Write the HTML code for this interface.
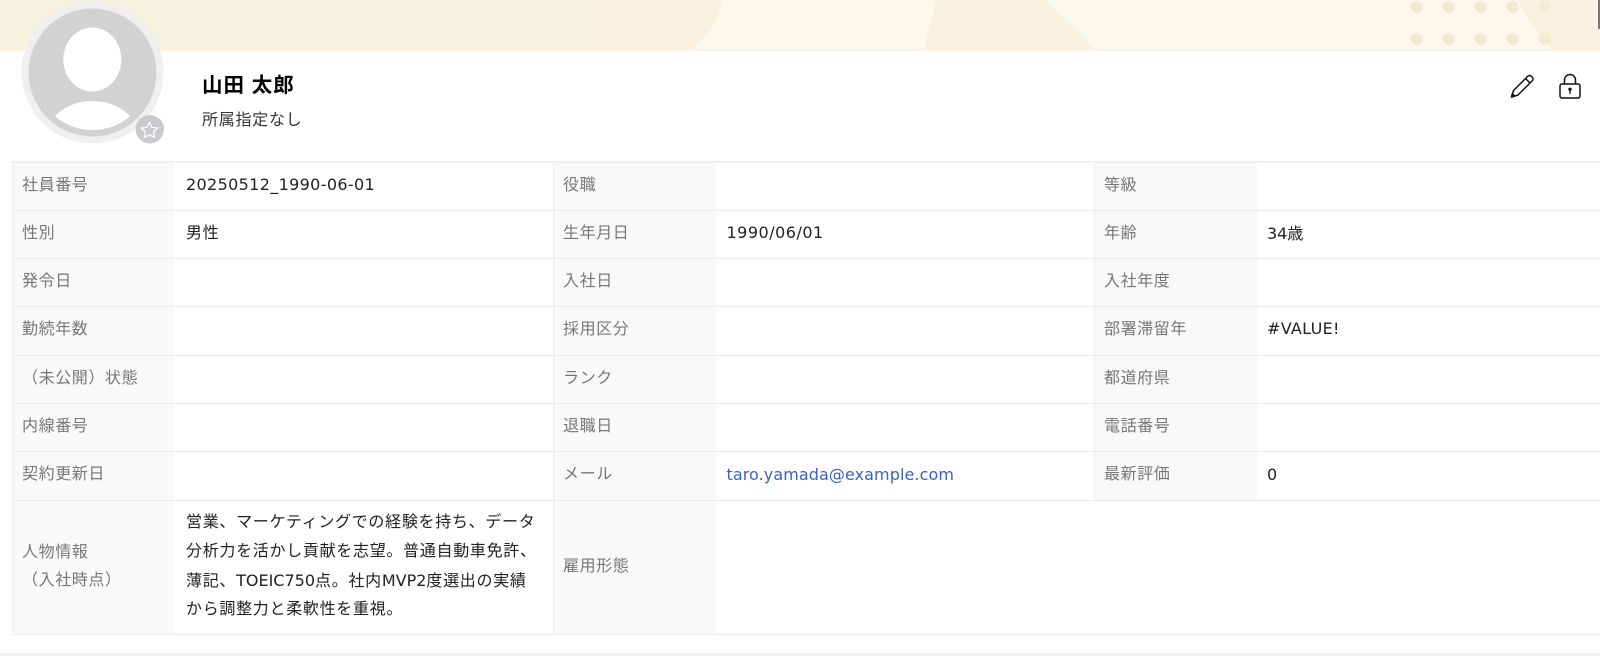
<!DOCTYPE html>
<html lang="ja"><head><meta charset="utf-8"><title>社員情報</title>
<style>
html,body{margin:0;padding:0;background:#fff}
body{width:1600px;height:659px;position:relative;overflow:hidden;font-family:"Liberation Sans","Noto Sans CJK JP",sans-serif;color:#222}
.a{position:absolute}
.t{position:absolute;font-size:16px;line-height:24px;white-space:nowrap;letter-spacing:.6px}
.l{color:#777}
.d{font-family:"DejaVu Sans","Noto Sans CJK JP",sans-serif;letter-spacing:0}
.bg{position:absolute;background:#f9f9fb}
.h{position:absolute;left:12px;width:1588px;height:1px;background:#ececef}
.v{position:absolute;top:161px;height:474px;width:1px;background:#ececef}
</style></head><body>
<svg class="a" style="left:0;top:0" width="1600" height="51" viewBox="0 0 1600 51">
<rect width="1600" height="51" fill="#fbf8ec"/>
<rect width="598" height="49" fill="#f6f2e0"/>
<path d="M598 0H722C719 20 709 36 692 49H598Z" fill="#f8f1df"/>
<path d="M936 0H1047C1064 20 1087 36 1093 49H924Z" fill="#f8f1df"/>
<path d="M1518 0C1528 22 1542 38 1552 49H1600V0Z" fill="#f8f1df"/>
<rect y="49" width="1600" height="2" fill="#f8f5e8"/>
<g fill="#f3e9cf">
<circle cx="1416.700" cy="6.700" r="6"/><circle cx="1448.700" cy="6.700" r="6"/><circle cx="1480.700" cy="6.700" r="6"/><circle cx="1512.700" cy="6.700" r="6"/><circle cx="1544.700" cy="6.700" r="6"/>
<circle cx="1416.700" cy="38.700" r="6"/><circle cx="1448.700" cy="38.700" r="6"/><circle cx="1480.700" cy="38.700" r="6"/><circle cx="1512.700" cy="38.700" r="6"/><circle cx="1544.700" cy="38.700" r="6"/>
</g>
<rect x="1598" y="0" width="2" height="29" fill="#777"/>
</svg>
<svg class="a" style="left:20px;top:0" width="150" height="150" viewBox="0 0 150 150">
<circle cx="72.500" cy="72.500" r="71" fill="#efefef"/>
<circle cx="72.500" cy="72.500" r="64" fill="#d2d2d2"/>
<ellipse cx="72.300" cy="59.500" rx="29" ry="32" fill="#fff"/>
<path d="M35 116C45 106 58 101 72.500 101C87 101 100 106 110 116C100 125 87 130 72.500 130C58 130 45 125 35 116Z" fill="#fff"/>
<circle cx="129.800" cy="129.200" r="14.200" fill="#c9cacd"/>
<path d="M129.500 122L131.900 127.300L137.700 128L133.400 131.900L134.600 137.500L129.500 134.700L124.400 137.500L125.600 131.900L121.300 128L127.100 127.300Z" fill="none" stroke="#fff" stroke-width="1.200" stroke-linejoin="round"/>
</svg>
<div class="t" style="left:202px;top:74px;font-size:20.500px;letter-spacing:1px;font-weight:700;color:#000">山田 太郎</div>
<div class="t" style="left:202px;top:109px;color:#333;letter-spacing:.75px">所属指定なし</div>
<svg class="a" style="left:1500px;top:70px" width="90" height="32" viewBox="0 0 90 32" fill="none" stroke="#111" stroke-width="1.500" stroke-linejoin="round">
<path d="M11.500 27L13.500 20.500L28 6Q29.500 5 31 6L32.500 7.500Q33.500 9 32.500 10.500L18 25Z"/>
<path d="M25.500 8.500L30 13"/>
<path d="M11.500 27L12.400 23.800L14.800 26Z" fill="#111"/>
<rect x="60" y="14" width="20" height="14" rx="2"/>
<path d="M64.500 14V10A5.500 5.500 0 0 1 75.500 10V14"/>
<circle cx="70" cy="19.300" r="1.700" fill="#111" stroke="none"/><path d="M70 19.500V24" stroke-width="1.300"/>
</svg>

<div class="bg" style="left:13px;top:162px;width:161px;height:472px"></div>
<div class="bg" style="left:554px;top:162px;width:162px;height:472px"></div>
<div class="bg" style="left:1095px;top:162px;width:162px;height:338px"></div>
<div class="h" style="top:161px;background:#f0f0f2;height:2px"></div><div class="h" style="top:210px"></div><div class="h" style="top:258px"></div><div class="h" style="top:306px"></div><div class="h" style="top:355px"></div><div class="h" style="top:403px"></div><div class="h" style="top:451px"></div><div class="h" style="top:500px"></div><div class="h" style="top:634px"></div>
<div class="v" style="left:12px"></div><div class="v" style="left:553px"></div><div class="v" style="left:1094px;height:339px"></div>

<div class="t l" style="left:22px;top:174px">社員番号</div><div class="t d" style="left:186px;top:173px;letter-spacing:.35px">20250512_1990-06-01</div>
<div class="t l" style="left:563px;top:174px">役職</div>
<div class="t l" style="left:1104px;top:174px">等級</div>
<div class="t l" style="left:22px;top:222px">性別</div><div class="t" style="left:186px;top:222px">男性</div>
<div class="t l" style="left:563px;top:222px">生年月日</div><div class="t d" style="left:726.500px;top:221px;letter-spacing:.5px">1990/06/01</div>
<div class="t l" style="left:1104px;top:222px">年齢</div><div class="t" style="left:1267px;top:222px"><span class="d">34</span>歳</div>
<div class="t l" style="left:22px;top:270px">発令日</div>
<div class="t l" style="left:563px;top:270px">入社日</div>
<div class="t l" style="left:1104px;top:270px">入社年度</div>
<div class="t l" style="left:22px;top:318px">勤続年数</div>
<div class="t l" style="left:563px;top:318px">採用区分</div>
<div class="t l" style="left:1104px;top:318px">部署滞留年</div><div class="t d" style="left:1267px;top:317px;letter-spacing:.3px">#VALUE!</div>
<div class="t l" style="left:22px;top:367px">（未公開）状態</div>
<div class="t l" style="left:563px;top:367px">ランク</div>
<div class="t l" style="left:1104px;top:367px">都道府県</div>
<div class="t l" style="left:22px;top:415px">内線番号</div>
<div class="t l" style="left:563px;top:415px">退職日</div>
<div class="t l" style="left:1104px;top:415px">電話番号</div>
<div class="t l" style="left:22px;top:463px">契約更新日</div>
<div class="t l" style="left:563px;top:463px">メール</div><div class="t d" style="left:726.500px;top:463px;color:#3b62c4;letter-spacing:.08px">taro.yamada@example.com</div>
<div class="t l" style="left:1104px;top:463px">最新評価</div><div class="t d" style="left:1267px;top:463px">0</div>
<div class="t l" style="left:22px;top:541px">人物情報</div>
<div class="t l" style="left:22px;top:569px">（入社時点）</div>
<div class="t" style="left:186px;top:509px;line-height:28.800px;letter-spacing:.7px">営業、マーケティングでの経験を持ち、データ<br>分析力を活かし貢献を志望。普通自動車免許、<br>薄記、<span class="d">TOEIC750</span>点。社内<span class="d">MVP2</span>度選出の実績<br>から調整力と柔軟性を重視。</div>
<div class="t l" style="left:563px;top:555px">雇用形態</div>
<div class="a" style="left:0;top:653px;width:1600px;height:3px;background:#f0f0f0"></div>
</body></html>
